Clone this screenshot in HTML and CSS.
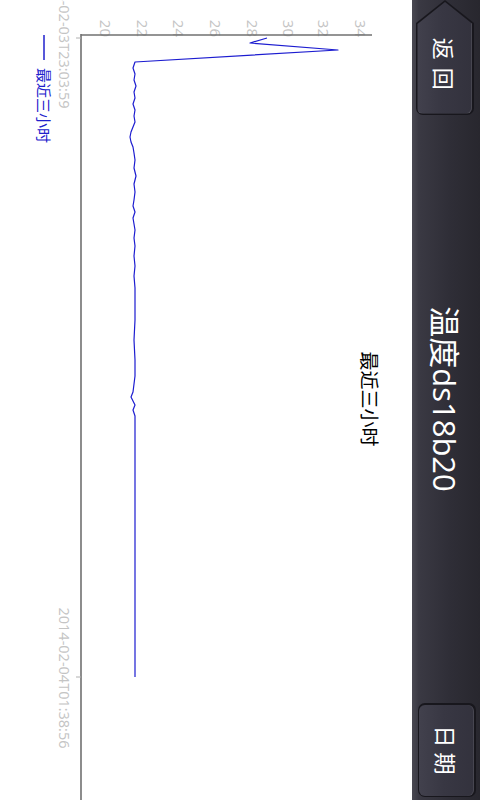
FILE: index.html
```html
<!DOCTYPE html>
<html>
<head>
<meta charset="utf-8">
<link rel="stylesheet" href="styles.css">
</head>
<body>
<div class="screen">
  <header class="bar">
    <div class="left">
      <button class="back"><span class="back-in">返回</span></button>
    </div>
    <h1 class="title">温度ds18b20</h1>
    <div class="right">
      <button class="date"><span class="date-in">日期</span></button>
    </div>
  </header>
  <svg class="chart" width="800" height="412" viewBox="0 68 800 412">
    <text class="ctitle" x="399" y="118" text-anchor="middle">最近三小时</text>
    <g class="ylab" text-anchor="end">
      <text x="37" y="380">20</text>
      <text x="37" y="343">22</text>
      <text x="37" y="307">24</text>
      <text x="37" y="270">26</text>
      <text x="37" y="233">28</text>
      <text x="37" y="197">30</text>
      <text x="37" y="162">32</text>
      <text x="37" y="125">34</text>
    </g>
    <line class="axis" x1="35" y1="108" x2="35" y2="399"></line>
    <line class="axis" x1="34" y1="399" x2="800" y2="399"></line>
    <line class="tick" x1="38" y1="399" x2="38" y2="404"></line>
    <line class="tick" x1="677" y1="399" x2="677" y2="404"></line>
    <polyline class="data" points="38,213 43,230 50,142 62,345 68,347 74,345 80,346 86,344 92,346 98,345 104,347 110,345 116,346 122,345 127,347 132,349 137,350 142,349 147,347 153,346 160,345 168,346 176,344 184,346 192,345 200,346 206,347 212,345 218,347 224,346 230,345 238,346 246,345 256,346 266,345 276,346 288,345 300,345 320,345 340,346 360,345 376,345 384,346 392,347 397,349 401,347 405,345 410,347 416,345 430,345 677,345"></polyline>
    <g class="xlab" text-anchor="middle">
      <text x="38" y="421">2014-02-03T23:03:59</text>
      <text x="678" y="421">2014-02-04T01:38:56</text>
    </g>
    <line class="legline" x1="35" y1="436" x2="60" y2="436"></line>
    <text class="legend" x="68" y="442">最近三小时</text>
  </svg>
</div>
</body>
</html>
```

FILE: styles.css
```css
html, body {
  margin: 0;
  padding: 0;
  width: 480px;
  height: 800px;
  overflow: hidden;
  background: #ffffff;
}

.screen {
  width: 800px;
  height: 480px;
  background: #ffffff;
  transform-origin: 0 0;
  transform: translateX(480px) rotate(90deg);
  display: flex;
  flex-direction: column;
  font-family: "Open Sans", "Noto Sans CJK SC", sans-serif;
}

.bar {
  height: 68px;
  flex: none;
  display: grid;
  grid-template-columns: 1fr auto 1fr;
  align-items: center;
  background: linear-gradient(to bottom, #28272e 0%, #2f2e37 45%, #3a3943 90%, #4a4952 100%);
}

.left {
  display: flex;
  justify-content: flex-start;
}

.right {
  display: flex;
  justify-content: flex-end;
  padding-right: 3px;
}

.title {
  margin: 0;
  color: #ffffff;
  font-weight: normal;
  font-size: 31px;
  line-height: 38px;
  font-family: "Open Sans", "Noto Sans CJK SC", sans-serif;
  padding-top: 2px;
  margin-right: 2px;
}

.back, .date {
  border: 0;
  padding: 0;
  margin: 0;
  display: flex;
  cursor: pointer;
  background: #18171d;
}

.back {
  width: 115px;
  height: 58px;
  margin-top: 2px;
  border-radius: 0 7px 7px 0;
  clip-path: polygon(0 50%, 23px 0, 100% 0, 100% 100%, 23px 100%);
}

.back-in {
  flex: 1;
  margin: 1.5px 1.5px 1.5px 0;
  border-radius: 0 6px 6px 0;
  clip-path: polygon(2px 50%, 24px 0, 100% 0, 100% 100%, 24px 100%);
  background: linear-gradient(to bottom, #33323d 0%, #383743 55%, #42414d 100%);
  box-shadow: inset 0 1px 0 rgba(255,255,255,0.10), inset -1px 0 0 rgba(255,255,255,0.06);
  color: #ffffff;
  font-size: 22px;
  letter-spacing: 8px;
  display: flex;
  align-items: center;
  justify-content: center;
  padding-left: 22px;
  font-family: "Noto Sans CJK SC", sans-serif;
}

.date {
  width: 94px;
  height: 58px;
  border-radius: 7px;
  margin-top: -2px;
}

.date-in {
  flex: 1;
  margin: 1.5px;
  border-radius: 6px;
  background: linear-gradient(to bottom, #33323d 0%, #383743 55%, #42414d 100%);
  box-shadow: inset 0 1px 0 rgba(255,255,255,0.10);
  color: #ffffff;
  font-size: 22px;
  letter-spacing: 5px;
  display: flex;
  align-items: center;
  justify-content: center;
  padding-left: 5px;
  font-family: "Noto Sans CJK SC", sans-serif;
}

.chart {
  display: block;
  flex: none;
}

.ctitle {
  font-family: "Noto Sans CJK SC", sans-serif;
  font-size: 19px;
  fill: #000000;
}

.ylab text {
  font-family: "Open Sans", sans-serif;
  font-size: 15px;
  fill: #c4c4c4;
}

.xlab text {
  font-family: "Open Sans", sans-serif;
  font-size: 14.5px;
  fill: #c4c4c4;
}

.axis {
  stroke: #707070;
  stroke-width: 1.6;
}

.tick {
  stroke: #b0b0b0;
  stroke-width: 1;
}

.data {
  fill: none;
  stroke: #1c1cd0;
  stroke-width: 1.2;
  stroke-linejoin: round;
}

.legline {
  stroke: #2020cc;
  stroke-width: 1.5;
}

.legend {
  font-family: "Noto Sans CJK SC", sans-serif;
  font-size: 15px;
  fill: #2020cc;
}
```
